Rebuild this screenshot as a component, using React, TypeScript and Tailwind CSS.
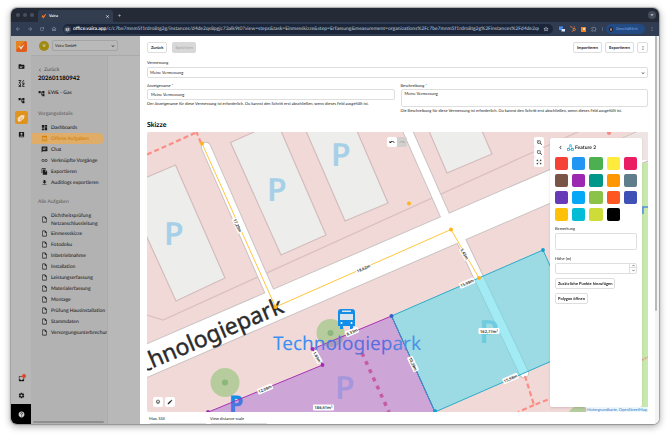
import React from "react";
import {
  MdAccountBox, MdAccountTree, MdArrowBack, MdArrowForward, MdChat, MdChevronLeft, MdClose, MdDashboard,
  MdEdit, MdFileCopy, MdFileDownload, MdHelp, MdInbox, MdAdd, MdLink, MdMoreVert,
  MdOutlineExtension, MdOutlineHome, MdOutlineInsertDriveFile, MdOutlineLayers, MdRedo, MdRefresh, MdSettings,
  MdStarBorder, MdTopic, MdTune, MdUndo, MdZoomIn, MdZoomOut, MdZoomOutMap, MdEventAvailable,
  MdExpandMore, MdExpandLess, MdArrowDropDown,
} from "react-icons/md";
import { FaHubspot } from "react-icons/fa";

const details = [
  { label: "Dashboards", Icon: MdDashboard },
  { label: "Offene Aufgaben", Icon: MdEventAvailable, active: true },
  { label: "Chat", Icon: MdChat },
  { label: "Verknüpfte Vorgänge", Icon: MdLink },
  { label: "Exportieren", Icon: MdFileCopy },
  { label: "Auditlogs exportieren", Icon: MdFileDownload },
];

const tasks = [
  "Einmessskizze", "Fotodoku", "Inbetriebnahme", "Installation", "Leistungserfassung",
  "Materialerfassung", "Montage", "Prüfung Hausinstallation", "Stammdaten", "Versorgungsunterbrechung",
];

const swatches = [
  ["Rot", "bg-[#f44336]"], ["Blau", "bg-[#2196f3]"], ["Grün", "bg-[#4caf50]"], ["Gelb", "bg-[#ffeb3b]"], ["Pink", "bg-[#e91e63]"],
  ["Braun", "bg-[#795548]"], ["Lila", "bg-[#9c27b0]"], ["Petrol", "bg-[#009688]"], ["Orange", "bg-[#ff9800]"], ["Blaugrau", "bg-[#607d8b]"],
  ["Violett", "bg-[#673ab7]"], ["Hellblau", "bg-[#03a9f4]"], ["Hellgrün", "bg-[#8bc34a]"], ["Tieforange", "bg-[#ff5722]"], ["Indigo", "bg-[#3f51b5]"],
  ["Bernstein", "bg-[#ffc107]"], ["Cyan", "bg-[#00bcd4]"], ["Limette", "bg-[#cddc39]"], ["Schwarz", "bg-black"],
];

const outline = "rounded-[2px] border border-[#dedede] bg-white";
const fieldText = "text-[4px] leading-[6px] text-[#222]";

function BrowserBar() {
  return (
    <header className="shrink-0 text-[#c9ced8]">
      <div className="flex h-[14px] items-end bg-[#242b37] pl-1">
        <div className="flex gap-[3px] self-center pl-px">
          <i className="size-1 rounded-full bg-[#4a515e]" />
          <i className="size-1 rounded-full bg-[#4a515e]" />
          <i className="size-1 rounded-full bg-[#4a515e]" />
        </div>
        <div className="ml-1 flex h-3 w-[75px] items-center rounded-t-[3px] bg-[#323d50] px-[3px] text-white">
          <svg viewBox="0 0 10 10" className="size-[6px]"><path d="M1 5l3 4 5-8-5 4z" fill="#ff9a26" /><path d="M1 3l3 2 5-4-5 8z" fill="#f36b21" /></svg>
          <span className="ml-[2px] flex-1 text-[4px] font-semibold">Vaira</span>
          <MdClose className="size-[5px]" />
        </div>
        <MdAdd className="mb-1 ml-1 size-[5px]" />
        <span className="mr-[3px] mb-[3px] ml-auto rounded-full bg-[#454d5a]"><MdArrowDropDown className="size-2" /></span>
      </div>
      <div className="flex h-[14px] items-center bg-[#303c52] px-1 text-[#8d97a8]">
        <div className="flex w-12 gap-[6px]">
          <MdArrowBack className="size-[6px]" />
          <MdArrowForward className="size-[6px]" />
          <MdRefresh className="size-[6px]" />
          <MdOutlineHome className="size-[6px]" />
        </div>
        <div className="flex h-[10px] min-w-0 flex-1 items-center rounded-full bg-[#1b263a] pr-1">
          <span className="ml-px flex size-[7px] items-center justify-center rounded-full bg-[#394559] text-white"><MdTune className="size-[5px]" /></span>
          <span className="ml-[2px] min-w-0 flex-1 overflow-hidden text-[5px] leading-[8px] font-medium whitespace-nowrap text-[#b9c1ce]">
            <b className="font-semibold text-white">office.vaira.app</b>/c/c7be7mnm5f1rdro8tg2g/instances/d4de2qs8pgjc73alk9t0?view=steps&amp;task=Einmesskizze&amp;step=Erfassung&amp;measurement=organizations%2Fc7be7mnm5f1rdro8tg2g%2Finstances%2Fd4de2qs8pgj...
          </span>
          <MdStarBorder className="ml-1 size-[6px] text-white" />
        </div>
        <div className="ml-[6px] flex items-center gap-[5px]">
          <svg viewBox="0 0 12 12" className="size-[6px]"><path d="M0 1h8v4H5v3H0z" fill="#4d8df5" /><path d="M5 6h7v5H5z" fill="#dbe7ff" /></svg>
          <FaHubspot className="size-[6px] text-[#f0803f]" />
          <i className="flex size-[5px] items-center justify-center bg-[#f58220]"><i className="size-[2px] rounded-full bg-white" /></i>
          <MdOutlineExtension className="size-[6px]" />
          <i className="h-1 w-px bg-[#556176]" />
        </div>
        <div className="ml-[3px] flex h-[10px] w-[39px] items-center rounded-full bg-[#234a83] px-[3px] text-[4px] font-medium text-[#6fa0e8]">
          <i className="mr-[3px] h-[5px] w-1 rounded-full border border-[#171c28] bg-[#b88b75]" />Geschäftlich
        </div>
        <MdMoreVert className="ml-1 size-[6px]" />
      </div>
    </header>
  );
}

function Rail() {
  const cell = "flex h-[17px] items-center justify-center";
  return (
    <nav aria-label="Hauptnavigation" className="flex w-5 shrink-0 flex-col bg-[#b8b8b8] text-[#141414]">
      <div className="flex h-5 items-center justify-center">
        <svg viewBox="0 0 20 20" className="size-[11px]"><rect width="20" height="20" rx="3" fill="#df5d1d" /><path d="M0 3Q0 0 3 0h14L0 17z" fill="#e4831f" /><path d="M4 8l5 3 7-6-7 11z" fill="#e9dfd8" /></svg>
      </div>
      <div className="mt-[2px]">
        <div className={cell}><MdTopic className="size-[7px]" /></div>
        <div className={cell}>
          <svg viewBox="0 0 14 14" className="size-[7px]" fill="none" stroke="currentColor" strokeWidth="1.6"><path d="M1 1h5L2 6h4M8 5l4-5M9 6h4M1 9l4 4M5 8v5H1M8 8h5M8 13l4-5M13 13H9" /></svg>
        </div>
        <div className={cell}><MdAccountTree className="size-[7px]" /></div>
        <div className={cell}>
          <span className="flex size-[13px] items-center justify-center rounded-[2px] bg-[#e0941f] text-white">
            <svg viewBox="0 0 16 16" className="size-2"><path d="M1 8l8-6 6 1-1 6-8 6H2z" fill="#f3e3c8" /><path d="M4 9l2 2M6 7l2 2M8 5.500l2 2M6 12l6-5" stroke="#d98a1a" strokeWidth="1" /></svg>
          </span>
        </div>
        <div className={cell}><MdAccountBox className="size-[7px]" /></div>
      </div>
      <div className="mt-auto">
        <div className={cell}><span className="relative"><MdInbox className="size-[7px]" /><i className="absolute -top-px -right-px size-1 rounded-full bg-[#e04425]" /></span></div>
        <div className={cell}><MdSettings className="size-[7px]" /></div>
        <div className="flex h-5 items-center justify-center bg-black text-[#cfcfcf]"><MdHelp className="size-[7px]" /></div>
      </div>
    </nav>
  );
}

function SidePanel() {
  const row = "flex h-[11px] items-center gap-[3px] pl-[10px] whitespace-nowrap";
  return (
    <div className="flex w-[109px] flex-col bg-[#b8b8b8] text-[#1c1c1c]">
      <div className="flex h-5 shrink-0 items-center border-b border-[#aaa] pl-2">
        <span className="flex size-[10px] items-center justify-center rounded-full bg-[#a08a14] text-[4px] text-white">V</span>
        <div className="relative ml-[3px] w-[66px] shrink-0">
          <select aria-label="Organisation" className="block h-[11px] w-full appearance-none rounded-[2px] border border-[#a4a4a4] bg-[#b9b9b9] px-[2px] text-[4px] leading-[8px]"><option>Vaira GmbH</option></select>
          <MdExpandMore className="pointer-events-none absolute top-[3px] right-[2px] size-[6px]" />
        </div>
      </div>
      <div className="flex w-[77px] flex-1 flex-col overflow-hidden border-r border-[#acacac] bg-[#b2b2b2] text-[5px] leading-[8px] font-medium">
        <a href="#back" className="mt-[10px] flex items-center gap-px pl-[6px] text-[#555]"><MdChevronLeft className="size-[6px]" />Zurück</a>
        <h1 className="pl-[7px] text-[6px] leading-[9px] font-bold text-black">202601180942</h1>
        <div className="mt-[6px] flex items-center gap-[3px] pl-[7px]"><MdAccountTree className="size-[7px]" />EWE - Gas</div>
        <h2 className="mt-[13px] pl-[7px] text-[#5d5d5d]">Vorgangsdetails</h2>
        <ul className="mt-1">
          {details.map(({ label, Icon, active }) => (
            <li key={label}>
              <a href="#" className={active ? "mr-[3px] flex h-[11px] items-center gap-[3px] rounded-r-full bg-[#dfad67] pl-[10px] text-[#d47d00]" : row}>
                <Icon className="size-[7px] shrink-0" />{label}
              </a>
            </li>
          ))}
        </ul>
        <h2 className="mt-[10px] pl-[7px] text-[#5d5d5d]">Alle Aufgaben</h2>
        <ul className="mt-[5px]">
          <li><a href="#" className="flex h-[17px] items-center gap-[3px] pl-[10px]"><MdOutlineInsertDriveFile className="size-[7px] shrink-0" /><span>Dichtheitsprüfung<br />Netzanschlussleitung</span></a></li>
          {tasks.map((t) => (
            <li key={t}><a href="#" className={row}><MdOutlineInsertDriveFile className="size-[7px] shrink-0" />{t}</a></li>
          ))}
        </ul>
        <i className="mt-auto mr-[3px] mb-px ml-[2px] h-[2px] rounded-full bg-[#8f8f8f]" />
      </div>
    </div>
  );
}

function Dist({ x, y, r, children, plain }: { x: number; y: number; r: number; children: string; plain?: boolean }) {
  const w = children.length * 2.5 + 1;
  return (
    <g transform={`translate(${x} ${y}) rotate(${r})`}>
      <rect x={-w / 2} y={-3} width={w} height={6} rx={1} fill="#fff" opacity={plain ? 0.85 : 1} />
      <text textAnchor="middle" y={1.5} fontSize={4} fontWeight={600} fill="#222">{children}</text>
    </g>
  );
}

function SketchMap() {
  return (
    <svg viewBox="147 132 501 280" preserveAspectRatio="xMinYMin slice" className="block h-full w-full font-['Noto_Sans',sans-serif]" role="img" aria-label="Karte">
      <defs>
        <linearGradient id="station" x1="0" x2="1" y1="0" y2="0">
          <stop offset="0.2" stopColor="#3a90f2" /><stop offset="0.45" stopColor="#5a70dc" /><stop offset="0.75" stopColor="#5a6cdc" /><stop offset="0.9" stopColor="#4a92e6" />
        </linearGradient>
      </defs>
      <rect x="147" y="132" width="501" height="280" fill="#f1d9d8" />
      <g fill="#ededec" stroke="#d3bcbc" strokeWidth="1.2">
        <path d="M140 180L175.500 165 225 278 176 301 140 222z" />
        <path d="M230.500 142.500L256 131 281 131 326 235 281 255z" />
        <path d="M306 131L357 131 388 203 345 221z" />
        <path d="M429 131L447 173 492 154 482 131z" />
      </g>
      <path d="M147 315l16 5 386-175 31-14" fill="none" stroke="#dcc0c1" strokeWidth="1.3" />
      <g fill="none" strokeLinecap="round">
        <g stroke="#cbc3c2"><path d="M206 147L270 293M405 125L447 220M459 236L524 373" strokeWidth="10.500" /><path d="M130 368L670 134.500" strokeWidth="32" /></g>
        <g stroke="#fff"><path d="M206 147L270 293M405 125L447 220M459 236L524 373" strokeWidth="8.500" /><path d="M130 368L670 134.500" strokeWidth="30" /></g>
      </g>
      <path d="M624 138l20-8h6v30h-8z" fill="#eee4e3" />
      <path d="M640 163h8v249h-8z" fill="#c8e9ad" />
      <path d="M643 214v-7h5" fill="none" stroke="#4f8fe8" strokeWidth="1.500" />
      <path d="M642 360l6-3" stroke="#eba19d" strokeWidth="2" strokeDasharray="2 1" />
      <g fill="none" stroke="#fb8d83" strokeWidth="2.200">
        <path d="M147 154.500L195 133M196 131l5 12" strokeDasharray="5 3" />
        <path d="M525 376l9 29 18-7M534 405l-16 7" strokeDasharray="5 3" />
        <path d="M362 353L389 412" strokeWidth="3.500" strokeDasharray="4 5" stroke="#e2607c" />
      </g>
      <circle cx="609" cy="133" r="2" fill="#f58a80" />
      <g fill="#b6cc9c"><circle cx="225" cy="382.500" r="14.500" /><circle cx="330.500" cy="333" r="14" /><circle cx="579" cy="417" r="11" /></g>
      <g fill="#8db67f"><circle cx="225" cy="382.500" r="3" /><circle cx="330.500" cy="333" r="3" /></g>
      <text x="285" y="312" textAnchor="end" transform="rotate(-23 285 312)" fontSize="23" fill="#2b2b2b" stroke="#2b2b2b" strokeWidth="0.400">hnologiepark</text>
      <path d="M147 369q2.500 1.500 5-1" fill="none" stroke="#2b2b2b" strokeWidth="2" />
      <g fill="#a6d0e8" fontSize="32" fontWeight="600">
        <text x="164" y="245">P</text><text x="267" y="200.500">P</text><text x="331" y="166">P</text>
      </g>
      <text x="229" y="412" fontSize="23" fontWeight="800" fill="#128de8">P</text>
      <g fill="#128de8">
        <path d="M341 309h11q3 0 3 3v14h-2v3h-3v-3h-7v3h-3v-3h-2v-14q0-3 3-3z" />
        <path d="M340 314h13v6h-13zM342 310.500h9v1.500h-9z" fill="#d8e4ee" /><circle cx="341.500" cy="323" r="1" fill="#fff" /><circle cx="351.500" cy="323" r="1" fill="#fff" />
      </g>
      <path d="M391.500 316L543 250 586 346 435 412z" fill="#64dcec" fillOpacity="0.6" stroke="#2aabc8" strokeWidth="1" />
      <path d="M391.500 316L312.500 349 322.500 365 206 413 435.500 413z" fill="#9c58d8" fillOpacity="0.4" stroke="#a832b4" strokeWidth="1" />
      <text x="335" y="399" fontSize="32" fontWeight="600" fill="#a697dc">P</text>
      <text x="479" y="342.500" fontSize="32" fontWeight="600" fill="#6fcbe0">P</text>
      <path d="M391.500 316L435 412" stroke="#2b9ec4" strokeWidth="1" />
      <text x="273" y="350" fontSize="19" fill="url(#station)">Technologiepark</text>
      <g fill="#0fa0cf"><circle cx="543" cy="250" r="1.900" /><circle cx="435" cy="411" r="1.900" /></g>
      <g fill="#a12bb0"><circle cx="312.500" cy="349" r="1.900" /><circle cx="322.500" cy="365" r="1.900" /><circle cx="208" cy="412" r="1.900" /></g>
      <circle cx="391.500" cy="316" r="2" fill="#3c5fc4" />
      <path d="M202 143.500L275.500 307 451 229.500 479 278" fill="none" stroke="#ffc53d" strokeWidth="1" />
      <g fill="#ffb41f"><circle cx="202" cy="143.500" r="2" /><circle cx="275.500" cy="307" r="2" /><circle cx="451" cy="229.500" r="2" /><circle cx="479" cy="278" r="2" /><circle cx="409" cy="203.500" r="2" /></g>
      <Dist x={237.5} y={225.5} r={65} plain>17,29m</Dist>
      <Dist x={363.5} y={268.5} r={-23} plain>18,62m</Dist>
      <Dist x={464.5} y={254} r={61} plain>5,43m</Dist>
      <Dist x={467} y={283} r={-23}>15,98m</Dist>
      <Dist x={510.5} y={378.5} r={-23}>15,98m</Dist>
      <Dist x={413} y={364} r={65}>10,29m</Dist>
      <Dist x={352} y={332} r={-23}>8,33m</Dist>
      <Dist x={317} y={357} r={60}>1,69m</Dist>
      <Dist x={265} y={389} r={-23}>12,08m</Dist>
      <Dist x={489} y={331} r={0}>162,77m²</Dist>
      <Dist x={323.5} y={407.5} r={0}>186,51m²</Dist>
    </svg>
  );
}

function FeaturePanel() {
  return (
    <aside className="absolute top-[6px] right-[6px] bottom-[5px] w-[92px] rounded-[2px] bg-white px-[5px] shadow-sm">
      <div className="flex h-[19px] items-center pl-[2px]">
        <button type="button" aria-label="Zurück"><MdChevronLeft className="size-[7px]" /></button>
        <svg viewBox="0 0 14 14" className="ml-[3px] size-[7px]" fill="none" stroke="#25acd3" strokeWidth="1.500"><circle cx="7" cy="2.500" r="1.800" /><path d="M6 4L3 9M8 4l3 5M5 11h4" /><rect x="1" y="9" width="4" height="4" /><rect x="9" y="9" width="4" height="4" /></svg>
        <h3 className="ml-px text-[5px] leading-[8px] font-bold">Feature 2</h3>
      </div>
      <div className="grid grid-cols-5 gap-1">
        {swatches.map(([name, color]) => (
          <button key={name} type="button" aria-label={name} className={`${color} h-[13px] rounded-[2px]`} />
        ))}
      </div>
      <label htmlFor="remark" className="mt-[5px] block text-[4px] leading-[6px]">Bemerkung</label>
      <textarea id="remark" className={`${outline} mt-px block h-[17px] w-full resize-none`} />
      <label htmlFor="height" className="mt-[6px] block text-[4px] leading-[6px]">Höhe (m)</label>
      <div className="mt-px flex h-[11px] rounded-[2px] border border-[#dedede]">
        <input id="height" type="text" className="min-w-0 flex-1" />
        <div className="flex w-[7px] flex-col border-l border-[#dedede]">
          <button type="button" aria-label="Erhöhen" className="flex h-1 items-center justify-center border-b border-[#dedede]"><MdExpandLess className="size-[5px] shrink-0" /></button>
          <button type="button" aria-label="Verringern" className="flex flex-1 items-center justify-center"><MdExpandMore className="size-[5px] shrink-0" /></button>
        </div>
      </div>
      <button type="button" className={`${outline} mt-1 block h-[11px] px-[2px] text-[4px] leading-[8px] font-bold`}>Zusätzliche Punkte hinzufügen</button>
      <button type="button" className={`${outline} mt-1 block h-[11px] px-[2px] text-[4px] leading-[8px] font-bold`}>Polygon öffnen</button>
    </aside>
  );
}

function Editor() {
  const btn = "h-[11px] rounded-[2px] border border-[#dedede] px-[3px] text-[4px] leading-[8px] font-bold";
  const tool = "flex size-[10px] items-center justify-center rounded-[2px] bg-white";
  const label = "block text-[4px] leading-[6px]";
  return (
    <main className="flex min-w-0 flex-1 overflow-hidden bg-white text-[#222]">
      <div className="min-w-0 flex-1 px-[7px] pt-[6px]">
        <div className="flex items-center">
          <button type="button" className={btn}>Zurück</button>
          <button type="button" disabled className="ml-[5px] h-[11px] rounded-[2px] bg-[#d8d8d8] px-[3px] text-[4px] leading-[8px] font-bold text-[#b0b0b0]">Speichern</button>
          <div className="ml-auto flex gap-[3px]">
            <button type="button" className={btn}>Importieren</button>
            <button type="button" className={btn}>Exportieren</button>
            <button type="button" aria-label="Mehr" className="flex size-[11px] items-center justify-center rounded-[2px] border border-[#dedede]"><MdMoreVert className="size-[6px]" /></button>
          </div>
        </div>
        <label htmlFor="survey" className={`${label} mt-[7px]`}>Vermessung</label>
        <div className="relative mt-px">
          <select id="survey" className={`${outline} ${fieldText} block h-[11px] w-full appearance-none px-[2px]`}><option>Meine Vermessung</option></select>
          <MdExpandMore className="pointer-events-none absolute top-[3px] right-[2px] size-[6px]" />
        </div>
        <div className="mt-[5px] grid grid-cols-2 gap-[6px]">
          <div>
            <label htmlFor="name" className={label}>Anzeigename *</label>
            <input id="name" defaultValue="Meine Vermessung" className={`${outline} ${fieldText} block h-[11px] w-full px-[3px]`} />
            <p className="mt-px text-[4px] leading-[5px]">Der Anzeigename für diese Vermessung ist erforderlich. Du kannst den Schritt erst abschließen, wenn dieses Feld ausgefüllt ist.</p>
          </div>
          <div>
            <label htmlFor="desc" className={label}>Beschreibung *</label>
            <textarea id="desc" defaultValue="Meine Vermessung" className={`${outline} ${fieldText} block h-[18px] w-full resize-none px-[3px] pt-px`} />
            <p className="mt-px text-[4px] leading-[5px]">Die Beschreibung für diese Vermessung ist erforderlich. Du kannst den Schritt erst abschließen, wenn dieses Feld ausgefüllt ist.</p>
          </div>
        </div>
        <h2 className="mt-[7px] text-[7px] leading-[10px] font-bold text-black">Skizze</h2>
        <section className="relative mt-[2px] aspect-[501/280] overflow-hidden rounded-[2px]">
          <SketchMap />
          <div className="absolute top-[5px] left-[48%] flex">
            <button type="button" aria-label="Rückgängig" className={tool}><MdUndo className="size-[6px]" /></button>
            <button type="button" aria-label="Wiederholen" disabled className="flex size-[10px] items-center justify-center rounded-r-[2px] bg-[#d3cfcf] text-[#aaa]"><MdRedo className="size-[6px]" /></button>
          </div>
          <div className="absolute top-[5px] right-[104px] flex flex-col">
            <button type="button" aria-label="Vergrößern" className={tool}><MdZoomIn className="size-[7px]" /></button>
            <button type="button" aria-label="Verkleinern" className={tool}><MdZoomOut className="size-[7px]" /></button>
            <button type="button" aria-label="Einpassen" className={tool}><MdZoomOutMap className="size-[6px]" /></button>
          </div>
          <div className="absolute bottom-[5px] left-[6px] flex gap-[2px]">
            <button type="button" aria-label="Ebenen" className={tool}><MdOutlineLayers className="size-[6px]" /></button>
            <button type="button" aria-label="Bearbeiten" className={tool}><MdEdit className="size-[6px]" /></button>
          </div>
          <FeaturePanel />
          <a href="#osm" className="absolute right-0 bottom-0 bg-[#eef6fb] px-px text-[4px] leading-[5px] text-[#1b76c8] underline">Hintergrundkarte, OpenStreetMap</a>
        </section>
        <div className="mt-1 flex gap-[3px] pl-[2px]">
          <div className="w-[58px]"><label htmlFor="sse" className={label}>Max. SSE</label><input id="sse" className={`${outline} mt-px block h-[11px] w-full`} /></div>
          <div className="w-[58px]"><label htmlFor="scale" className={label}>View distance scale</label><input id="scale" className={`${outline} mt-px block h-[11px] w-full`} /></div>
        </div>
      </div>
      <div className="w-1 shrink-0 bg-[#f4f4f4]"><i className="block h-[71%] w-[2px] rounded-full bg-[#b9b9b9]" /></div>
    </main>
  );
}

export default function App() {
  return (
    <div className="flex h-screen flex-col bg-white px-[11px] pt-2 pb-[14px] font-['Lato','Noto_Sans',sans-serif] [text-rendering:geometricPrecision]">
      <div className="flex min-h-0 flex-1 flex-col overflow-hidden rounded-[6px] shadow-[0_2px_7px_1px_rgba(0,0,0,0.3),0_0_1px_1px_rgba(0,0,0,0.25)]">
        <BrowserBar />
        <div className="flex min-h-0 flex-1">
          <Rail />
          <SidePanel />
          <Editor />
        </div>
      </div>
    </div>
  );
}
